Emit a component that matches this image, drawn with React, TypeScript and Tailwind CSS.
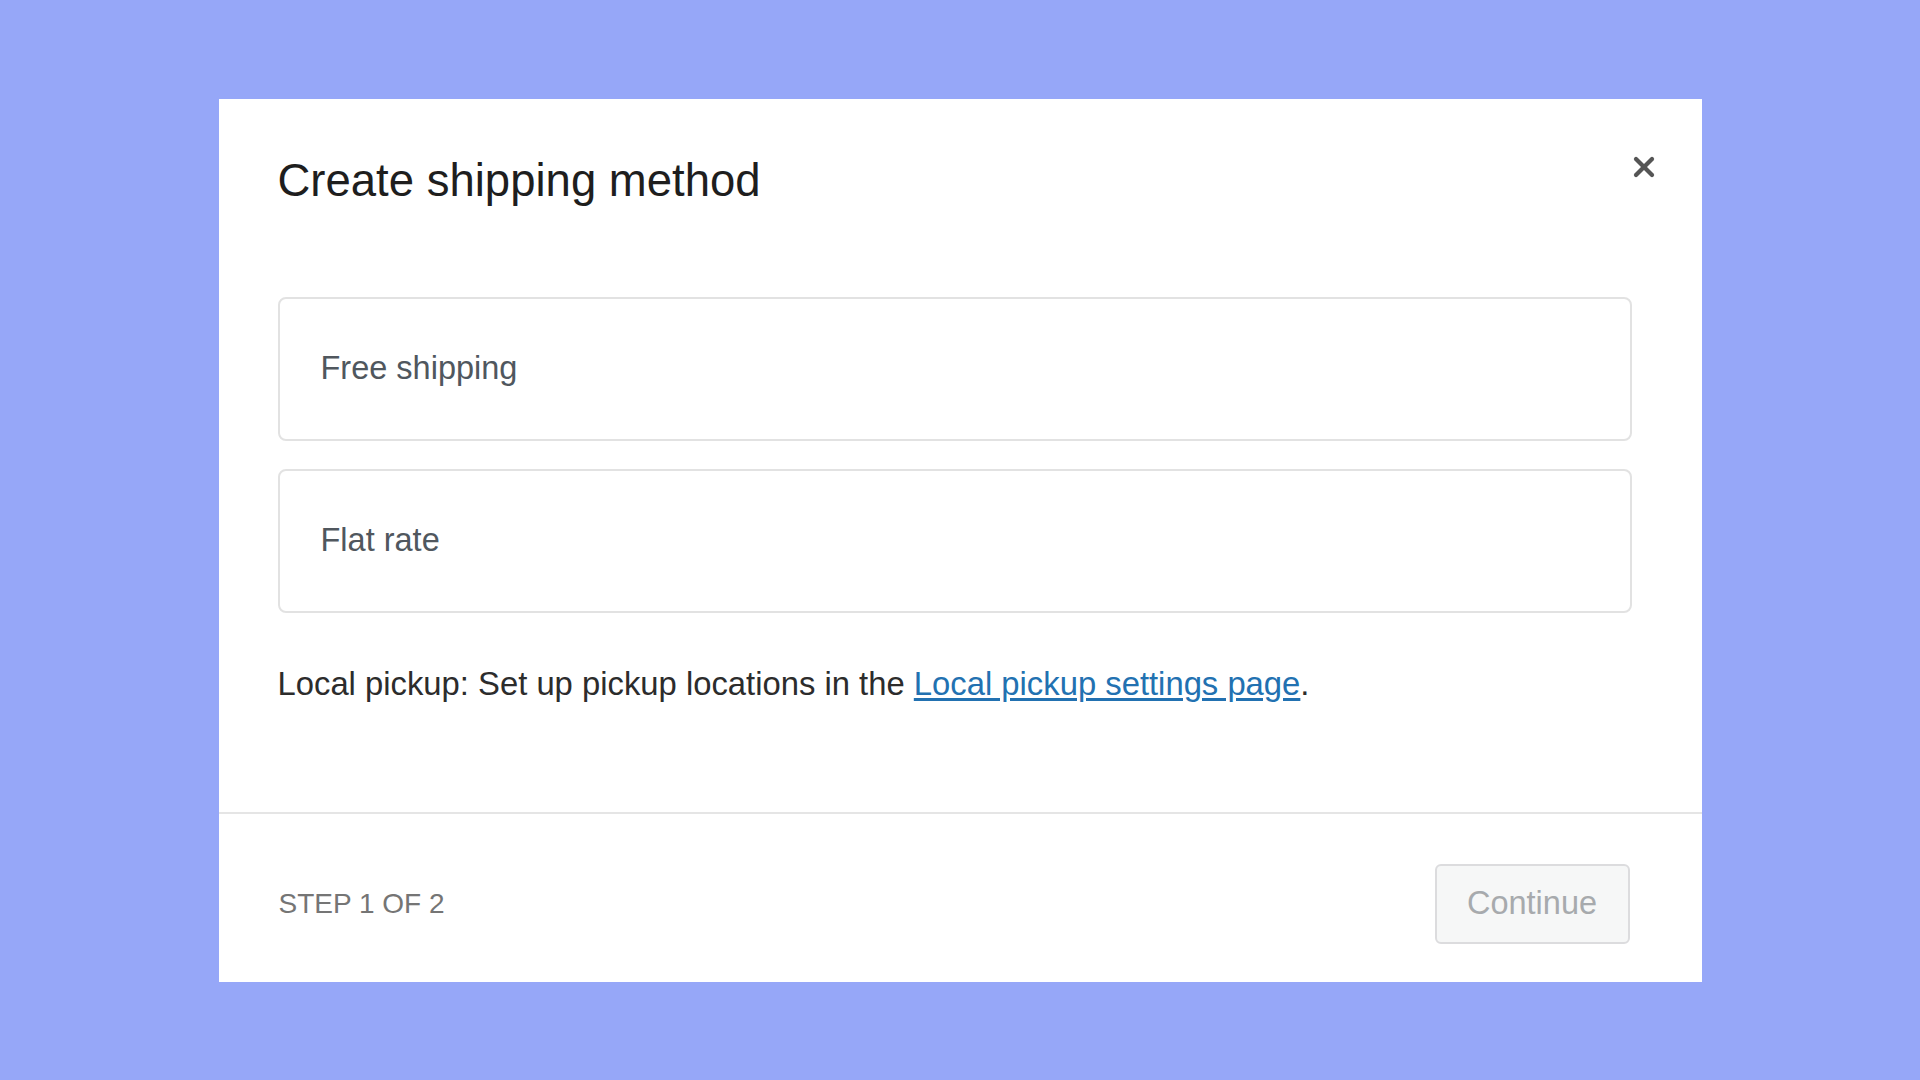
import { X } from "lucide-react";

const methods = ["Free shipping", "Flat rate"];

function MethodCard({ label }: { label: string }) {
  return (
    <button
      type="button"
      className="flex h-[144px] w-full items-center rounded-lg border-2 border-[#e2e2e2] bg-white pl-[41px] text-left text-[32.5px] leading-[1.2] text-[#50575e]"
    >
      {label}
    </button>
  );
}

export default function App() {
  return (
    <div
      className="flex h-screen w-full items-center justify-center bg-[#96a7f8]"
      style={{ fontFamily: '"Liberation Sans", Arial, sans-serif' }}
    >
      <div className="relative flex h-[883px] w-[1483px] flex-col bg-white">
        <button
          type="button"
          aria-label="Close"
          className="absolute right-[42px] top-[52px] text-[#555555]"
        >
          <X className="h-[32px] w-[32px]" strokeWidth={3.2} />
        </button>

        <div className="flex-1 pl-[59px] pr-[70px] pt-[54px]">
          <h1 className="text-[45.5px] leading-[55px] text-[#1e1e1e]">
            Create shipping method
          </h1>

          <div className="mt-[89px] flex flex-col gap-[28px]">
            {methods.map((m) => (
              <MethodCard key={m} label={m} />
            ))}
          </div>

          <p className="mt-[51px] text-[32.8px] leading-[1.2] text-[#2c2c2c]">
            Local pickup: Set up pickup locations in the{" "}
            <a href="#" className="text-[#2271b1] underline underline-offset-[3px]">
              Local pickup settings page
            </a>
            .
          </p>
        </div>

        <div className="flex h-[170px] items-center justify-between border-t-2 border-[#e5e5e5] pl-[60px] pr-[72px] pt-[12px]">
          <span className="text-[28px] leading-[1.2] text-[#757575]">STEP 1 OF 2</span>
          <button
            type="button"
            disabled
            className="flex h-[80px] w-[195px] items-center justify-center rounded-[6px] border-2 border-[#dcdcde] bg-[#f6f7f7] text-[32.5px] text-[#a7aaad]"
          >
            Continue
          </button>
        </div>
      </div>
    </div>
  );
}
